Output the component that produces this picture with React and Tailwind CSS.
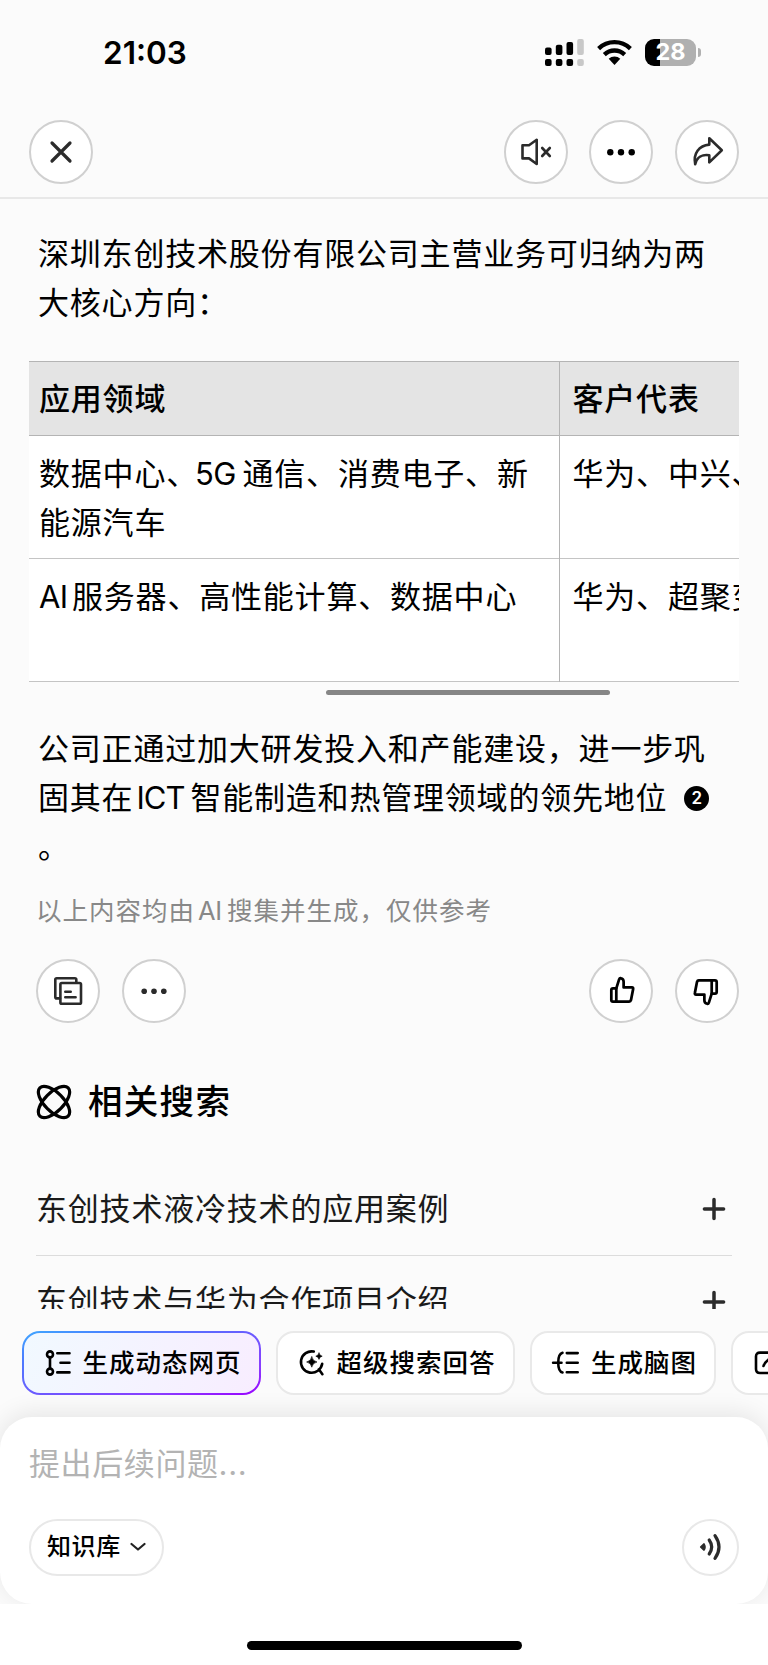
import React from 'react';

function RoundButton({ children }) {
  return (
    <button className="flex h-16 w-16 shrink-0 items-center justify-center rounded-full border-2 border-[#d0d0d0] bg-white">
      <svg
        className="shrink-0"
        width="40"
        height="40"
        viewBox="-20 -20 40 40"
        fill="none"
        stroke="#2b2b2b"
        strokeWidth="2.6"
        strokeLinecap="round"
        strokeLinejoin="round"
      >
        {children}
      </svg>
    </button>
  );
}

function ThumbPaths() {
  return (
    <>
      <path d="M-5 -2.7L-2 -12.3Q-1.5 -13.8 -.2 -13.6Q2.8 -13 2.8 -9.8V-3.8H11.6Q13.3 -3.7 12.9 -2L10.6 9.8Q10.2 11.3 8.7 11.3H-8.5Q-10.3 11.3 -10.3 9.5V-1Q-10.3 -2.7 -8.5 -2.7Z" />
      <path d="M-5 -2.7V11.3" />
    </>
  );
}

function StatusBar() {
  return (
    <div className="flex h-[104px] items-center justify-between pl-[103px] pr-[67px]">
      <span className="pt-px text-[31.5px] leading-none font-semibold">21:03</span>
      <div className="flex items-center">
        <svg width="39" height="27" viewBox="0 0 39 27">
          <rect x="0" y="8.5" width="6.6" height="7.5" rx="2" />
          <rect x="10.8" y="5.8" width="6.6" height="10.2" rx="2" />
          <rect x="21.5" y="3" width="6.6" height="13" rx="2" />
          <rect x="32.2" y="0" width="6.6" height="16" rx="2" fill="#c8c8c8" />
          <rect x="0" y="20" width="6.6" height="7" rx="2" />
          <rect x="10.8" y="20" width="6.6" height="7" rx="2" />
          <rect x="21.5" y="20" width="6.6" height="7" rx="2" />
          <rect x="32.2" y="20" width="6.6" height="7" rx="2" fill="#c8c8c8" />
        </svg>
        <svg className="ml-[13px]" width="35" height="27" viewBox="0 0 35 27" fill="none" stroke="#000" strokeWidth="4.3">
          <path d="M1.6 9.6A23 23 0 0 1 33.4 9.6" />
          <path d="M7.3 15.6A14.8 14.8 0 0 1 27.7 15.6" />
          <path d="M11.7 19.8A8.5 8.5 0 0 1 23.3 19.8L17.5 26Z" fill="#000" stroke="none" />
        </svg>
        <div className="ml-[13px] flex h-[27px] w-[51px] items-center justify-center rounded-[9px] bg-[linear-gradient(90deg,#000_15px,#b0b0b0_15px)] text-[23.5px] leading-none font-bold text-white">
          28
        </div>
        <div className="ml-0.5 h-[9px] w-[3px] rounded-r-full bg-[#b0b0b0]" />
      </div>
    </div>
  );
}

function Header() {
  return (
    <div className="flex h-[95px] items-start justify-between border-b-2 border-[#e8e8e8] px-[29px] pt-4">
      <RoundButton>
        <path d="M-9 -9L9 9M9 -9L-9 9" strokeWidth="3.2" />
      </RoundButton>
      <div className="flex">
        <RoundButton>
          <path d="M-13.5 -6.8H-7L.7 -12.2V12L-7 6.4H-13.5Z" />
          <path d="M6.2 -4L13.8 4M13.8 -4L6.2 4" />
        </RoundButton>
        <div className="ml-[21px] flex gap-[22px]">
          <RoundButton>
            <g fill="#000" stroke="none">
              <circle cx="-10.7" cy="0.3" r="3.2" />
              <circle cx="0" cy="0.3" r="3.2" />
              <circle cx="10.7" cy="0.3" r="3.2" />
            </g>
          </RoundButton>
          <RoundButton>
            <path d="M2.3 -13.8L14.8 -1.8L2.3 10.4V3.2C-4.5 2 -10.2 5 -11.8 12.2C-14 1.5 -8 -6.6 2.3 -7.4Z" />
          </RoundButton>
        </div>
      </div>
    </div>
  );
}

function AnswerTable() {
  return (
    <div className="mx-[29px] mt-[34px] shrink-0 overflow-hidden">
      <table className="w-[900px] table-fixed border-collapse text-left">
        <thead>
          <tr className="h-[74px] border-y border-[#b4b4b4] bg-[#e4e4e4]">
            <th className="w-[530px] border-r border-[#b4b4b4] pl-2.5 font-medium">应用领域</th>
            <th className="pl-[13px] font-medium">客户代表</th>
          </tr>
        </thead>
        <tbody>
          <tr className="h-[123px] border-b border-[#c4c4c4] bg-white align-top">
            <td className="border-r border-[#b4b4b4] pt-3.5 pl-2.5 whitespace-nowrap">
              数据中心、<span className="-ml-[3px] inline-block w-[47.5px] tracking-[-0.5px]">5G</span>通信、消费电子、新
              <br />
              能源汽车
            </td>
            <td className="pt-3.5 pl-[13px] whitespace-nowrap">华为、中兴、浪潮</td>
          </tr>
          <tr className="h-[123px] border-b border-[#c4c4c4] bg-white align-top">
            <td className="border-r border-[#b4b4b4] pt-3.5 pl-2.5 whitespace-nowrap">
              <span className="inline-block w-[33px] tracking-[-0.7px]">AI</span>服务器、高性能计算、数据中心
            </td>
            <td className="pt-3.5 pl-[13px] whitespace-nowrap">华为、超聚变、新华三</td>
          </tr>
        </tbody>
      </table>
      <div className="mt-2 ml-[297px] h-[5px] w-[284px] rounded-full bg-[#868686]" />
    </div>
  );
}

function Plus() {
  return (
    <svg width="24" height="24" viewBox="0 0 24 24" stroke="#2b2b2b" strokeWidth="3.5" strokeLinecap="round">
      <path d="M12 2.4V21.6M2.4 12H21.6" />
    </svg>
  );
}

function Chip({ children, label, className }) {
  return (
    <div className={`flex h-16 shrink-0 items-center rounded-[18px] border-2 border-[#e9e9e9] bg-white text-[25.5px] font-medium tracking-[1px] whitespace-nowrap ${className}`}>
      {children}
      {label}
    </div>
  );
}

function ChipIcon({ children }) {
  return (
    <svg
      className="mr-2.5 shrink-0 overflow-visible"
      width="27"
      height="26"
      viewBox="0 0 27 26"
      fill="none"
      stroke="#000"
      strokeWidth="2.6"
      strokeLinecap="round"
      strokeLinejoin="round"
    >
      {children}
    </svg>
  );
}

function Chips() {
  return (
    <div className="flex gap-[15px] overflow-hidden pl-[22px]">
      <div className="shrink-0 rounded-[18px] bg-[linear-gradient(to_bottom_right,#3fa8ff_0%,#4a7cff_22%,#6a5cff_50%,#8a3cff_78%,#9a00ff_100%)] p-[2px]">
        <div className="flex h-[60px] w-[235px] items-center rounded-[16px] bg-[linear-gradient(110deg,#f1f9ff,#f8edff)] pl-[21.5px] text-[25.5px] font-medium tracking-[1px] whitespace-nowrap">
          <ChipIcon>
            <circle cx="4" cy="4.4" r="3" />
            <circle cx="4" cy="21.6" r="3" />
            <path d="M4 7.5V18.5M11.3 3.3H23.5M14.5 12.8H23.5M11.3 22.4H23.5" />
          </ChipIcon>
          生成动态网页
        </div>
      </div>
      <Chip label="超级搜索回答" className="w-[239px] pl-[21.5px]">
        <ChipIcon>
          <path d="M13.8 1.6A10.7 10.7 0 1 0 22.2 13.8M18.8 19.3L22.4 24.2" />
          <path
            d="M11.8 6.8Q12.6 11.2 17 12Q12.6 12.8 11.8 17.2Q11 12.8 6.6 12Q11 11.2 11.8 6.8ZM19 3Q19.5 5.7 22.2 6.2Q19.5 6.7 19 9.4Q18.5 6.7 15.8 6.2Q18.5 5.7 19 3Z"
            fill="#000"
            stroke="#000"
            strokeWidth="0.6"
          />
        </ChipIcon>
      </Chip>
      <Chip label="生成脑图" className="w-[186px] pl-[22px]">
        <ChipIcon>
          <path d="M8.5 2.8C2.8 4.4 2.8 21 8.5 22.4M-.9 12.7H7.5M12.8 3.1H23.7M12.8 12.7H23.7M12.8 22.2H23.7" />
        </ChipIcon>
      </Chip>
      <Chip label="生成文档" className="w-[186px] pl-[20.5px]">
        <ChipIcon>
          <path d="M16 2.6H6Q2 2.6 2 6.6V19Q2 23 6 23H18Q22 23 22 19V14M9.5 16Q10.5 12.5 14 10L23 3" />
        </ChipIcon>
      </Chip>
    </div>
  );
}

function Composer() {
  return (
    <div className="mt-[22px] h-[187px] rounded-[32px] bg-white px-[29px] pt-[23px] shadow-[0_-4px_24px_rgba(0,0,0,0.09)]">
      <div className="tracking-[0.6px] text-[#b3b3b3]">提出后续问题...</div>
      <div className="mt-[30px] flex items-center justify-between">
        <div className="flex h-[57px] w-[135px] items-center rounded-full border-2 border-[#e8e8e8] pl-4 text-[24px] font-medium tracking-[0.6px]">
          知识库
          <svg className="ml-[9px]" width="16" height="10" viewBox="0 0 16 10" fill="none" stroke="#222" strokeWidth="2.2" strokeLinecap="round" strokeLinejoin="round">
            <path d="M1.5 2L8 7.5L14.5 2" />
          </svg>
        </div>
        <div className="flex h-[57px] w-[57px] items-center justify-center rounded-full border-2 border-[#e8e8e8]">
          <svg width="30" height="30" viewBox="-15 -15 30 30" fill="none" stroke="#2b2b2b" strokeWidth="3.2" strokeLinecap="round">
            <path d="M-10.4 0L-7 -3.2Q-4.8 0 -7 3.2Z" fill="#2b2b2b" strokeWidth="1.4" strokeLinejoin="round" />
            <path d="M-1.8 -7Q3.2 0 -1.8 7M4 -11.4Q12 0 4 11.4" />
          </svg>
        </div>
      </div>
    </div>
  );
}

export default function App() {
  return (
    <div className="flex h-[1665px] w-[768px] flex-col overflow-hidden bg-[#fbfbfb] font-['Inter','Noto_Sans_CJK_SC',sans-serif] text-[31px] leading-[48.7px] tracking-[0.8px] text-black">
      <div className="flex h-[1309px] shrink-0 flex-col overflow-hidden">
        <div className="tracking-normal">
          <StatusBar />
          <Header />
        </div>

        <p className="mt-[31px] pl-[38px] whitespace-nowrap">
          深圳东创技术股份有限公司主营业务可归纳为两
          <br />
          大核心方向：
        </p>

        <AnswerTable />

        <p className="mt-[30px] h-[149px] shrink-0 pl-[38px] whitespace-nowrap">
          公司正通过加大研发投入和产能建设，进一步巩
          <br />
          固其在<span className="inline-block w-[57px] pl-[3px] tracking-[-0.9px]">ICT</span>智能制造和热管理领域的领先地位
          <span className="-my-2 ml-[17px] inline-flex h-[25px] w-[25px] items-center justify-center rounded-full bg-black align-[5px] text-[17px] leading-none font-semibold tracking-normal text-white">
            2
          </span>
          <br />。
        </p>

        <p className="mt-[13px] shrink-0 pl-9 text-[25.5px] tracking-[1px] text-[#888]">
          以上内容均由<span className="inline-block w-[32px] pl-[3px] tracking-[-0.3px]">AI</span>搜集并生成，仅供参考
        </p>

        <div className="mt-[23px] flex shrink-0 justify-between pr-[29px] pl-9">
          <div className="flex gap-[22px]">
            <RoundButton>
              <path d="M-8 7.4H-11.2Q-12.7 7.4 -12.7 5.9V-11.4Q-12.7 -12.8 -11.2 -12.8H6.8Q8.3 -12.8 8.3 -11.4V-8.2" />
              <rect x="-7.6" y="-8" width="20.6" height="20.8" rx="1.4" />
              <path d="M-2.7 0.8H2.7M-2.7 6.2H7.6" />
            </RoundButton>
            <RoundButton>
              <g fill="#2b2b2b" stroke="none">
                <circle cx="-9.8" cy="0.2" r="2.8" />
                <circle cx="0" cy="0.2" r="2.8" />
                <circle cx="9.8" cy="0.2" r="2.8" />
              </g>
            </RoundButton>
          </div>
          <div className="flex gap-[22px]">
            <RoundButton>
              <g stroke="#000" strokeWidth="2.9" transform="scale(.94)">
                <ThumbPaths />
              </g>
            </RoundButton>
            <RoundButton>
              <g stroke="#000" strokeWidth="2.9" transform="rotate(180) scale(.94)">
                <ThumbPaths />
              </g>
            </RoundButton>
          </div>
        </div>

        <div className="mt-[55px] flex shrink-0 items-center pl-9">
          <svg width="36" height="36" viewBox="-18 -18 36 36" fill="none" stroke="#000" strokeWidth="3.2">
            <ellipse rx="20" ry="9.4" transform="rotate(45)" />
            <ellipse rx="20" ry="9.4" transform="rotate(-45)" />
          </svg>
          <h2 className="ml-4 text-[34.5px] font-medium tracking-[1.3px]">相关搜索</h2>
        </div>

        <div className="mr-9 ml-9 shrink-0 text-[#1a1a1a]">
          <div className="mt-[37px] flex h-[92px] items-center justify-between border-b border-[#dcdcdc] pr-1.5">
            <span>东创技术液冷技术的应用案例</span>
            <Plus />
          </div>
          <div className="flex h-[92px] items-center justify-between pr-1.5">
            <span>东创技术与华为合作项目介绍</span>
            <Plus />
          </div>
        </div>
      </div>

      <div className="pt-[22px]">
        <Chips />
        <Composer />
      </div>

      <div className="flex grow justify-center bg-white pt-[37px]">
        <div className="h-[9px] w-[275px] rounded-full bg-black" />
      </div>
    </div>
  );
}
